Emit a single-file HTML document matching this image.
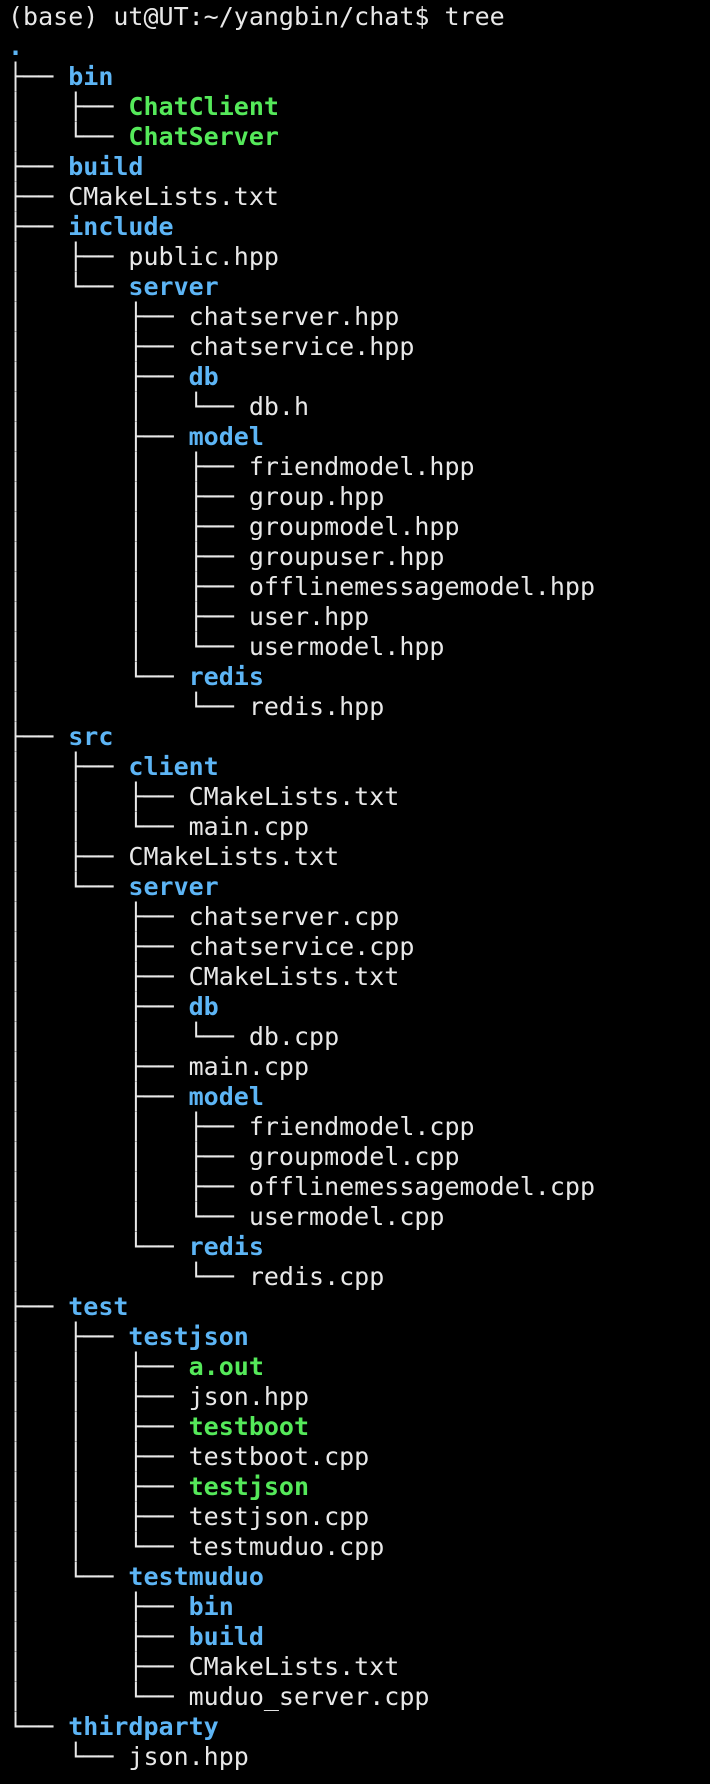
<!DOCTYPE html><html><head><meta charset="utf-8"><style>
html,body{margin:0;background:#000;width:710px;height:1784px;overflow:hidden}
pre{margin:0;padding:2px 0 0 8px;font-family:"DejaVu Sans Mono","Liberation Mono",monospace;font-size:25px;line-height:30px;color:#e8e8e8}
b{color:#5db5f5}i{font-style:normal;font-weight:bold;color:#55e95a}
</style></head><body><pre>(base) ut@UT:~/yangbin/chat$ tree
<b>.</b>
├── <b>bin</b>
│   ├── <i>ChatClient</i>
│   └── <i>ChatServer</i>
├── <b>build</b>
├── CMakeLists.txt
├── <b>include</b>
│   ├── public.hpp
│   └── <b>server</b>
│       ├── chatserver.hpp
│       ├── chatservice.hpp
│       ├── <b>db</b>
│       │   └── db.h
│       ├── <b>model</b>
│       │   ├── friendmodel.hpp
│       │   ├── group.hpp
│       │   ├── groupmodel.hpp
│       │   ├── groupuser.hpp
│       │   ├── offlinemessagemodel.hpp
│       │   ├── user.hpp
│       │   └── usermodel.hpp
│       └── <b>redis</b>
│           └── redis.hpp
├── <b>src</b>
│   ├── <b>client</b>
│   │   ├── CMakeLists.txt
│   │   └── main.cpp
│   ├── CMakeLists.txt
│   └── <b>server</b>
│       ├── chatserver.cpp
│       ├── chatservice.cpp
│       ├── CMakeLists.txt
│       ├── <b>db</b>
│       │   └── db.cpp
│       ├── main.cpp
│       ├── <b>model</b>
│       │   ├── friendmodel.cpp
│       │   ├── groupmodel.cpp
│       │   ├── offlinemessagemodel.cpp
│       │   └── usermodel.cpp
│       └── <b>redis</b>
│           └── redis.cpp
├── <b>test</b>
│   ├── <b>testjson</b>
│   │   ├── <i>a.out</i>
│   │   ├── json.hpp
│   │   ├── <i>testboot</i>
│   │   ├── testboot.cpp
│   │   ├── <i>testjson</i>
│   │   ├── testjson.cpp
│   │   └── testmuduo.cpp
│   └── <b>testmuduo</b>
│       ├── <b>bin</b>
│       ├── <b>build</b>
│       ├── CMakeLists.txt
│       └── muduo_server.cpp
└── <b>thirdparty</b>
    └── json.hpp
</pre></body></html>
